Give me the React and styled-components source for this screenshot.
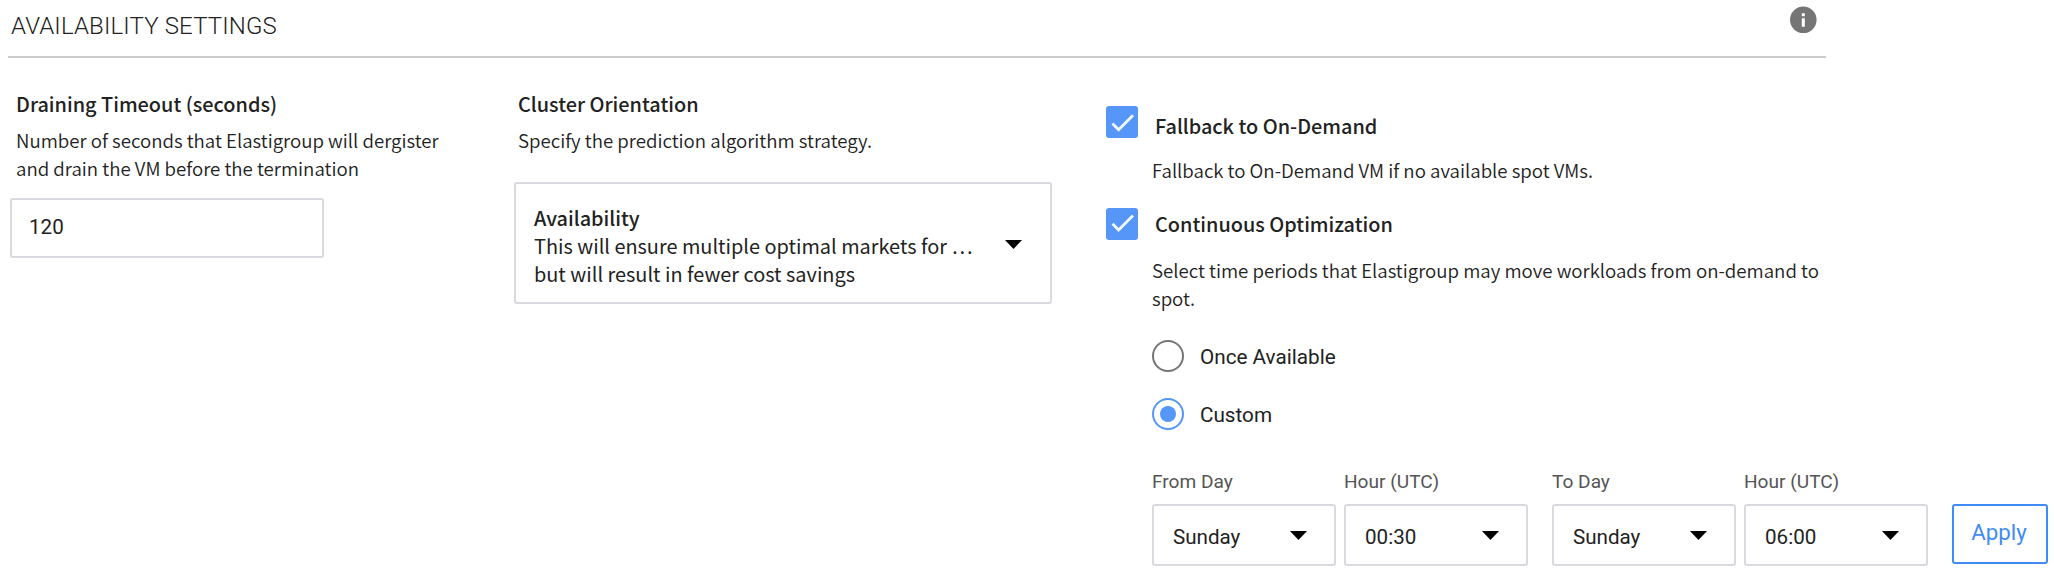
import React from "react";
import styled, { createGlobalStyle } from "styled-components";

const source = '"Noto Sans CJK SC", sans-serif';
const sourceBook = '"Noto Sans CJK SC DemiLight", "Noto Sans CJK SC", sans-serif';

const GlobalStyle = createGlobalStyle`
  *, *::before, *::after { box-sizing: border-box; }
  body {
    margin: 0;
    background: #fff;
    color: #222;
    font-family: Roboto, sans-serif;
  }
`;

const Page = styled.main`
  width: 2054px;
  height: 572px;
  overflow: hidden;
  background: #fff;
`;

const Header = styled.header`
  display: flex;
  justify-content: space-between;
  align-items: flex-start;
  width: 1818px;
  height: 58px;
  margin-left: 8px;
  padding: 6px 9px 0 3px;
  border-bottom: 2px solid #ccc;
`;

const Title = styled.h1`
  margin: 5px 0 0;
  font-size: 24px;
  line-height: 30px;
  font-weight: 300;
  letter-spacing: 0.15px;
`;

const InfoIcon = styled.svg`
  display: block;
  width: 28px;
  height: 28px;
`;

const Columns = styled.div`
  display: grid;
  grid-template-columns: 504px 592px 948px;
  padding-left: 10px;
`;

const Column = styled.section`
  padding-top: ${(p) => p.$top}px;
`;

const Label = styled.h2`
  margin: 0 0 0 ${(p) => p.$indent || 0}px;
  font-family: ${source};
  font-size: 19.88px;
  line-height: 28px;
  font-weight: 500;
  white-space: nowrap;
`;

const Text = styled.p`
  margin: ${(p) => p.$gap}px 0 0 ${(p) => p.$indent || 0}px;
  font-family: ${sourceBook};
  font-size: 18.66px;
  font-weight: 350;
  line-height: 28px;
  color: #222;
  white-space: nowrap;
`;

const NumberInput = styled.input`
  display: block;
  width: 314px;
  height: 60px;
  margin-top: 16px;
  padding: 0 17px 2px;
  border: 2px solid #d9d9df;
  border-radius: 3px;
  background: #fff;
  color: #222;
  font: 400 20.6px Roboto, sans-serif;
  outline: none;
`;

const StrategySelect = styled.div`
  display: flex;
  justify-content: space-between;
  align-items: center;
  width: 538px;
  height: 122px;
  margin-top: 28px;
  padding: 0 28px 0 18px;
  border: 2px solid #d9d9df;
  border-radius: 3px;
`;

const StrategyText = styled.div`
  padding-top: 5px;
  font-family: ${source};
  font-size: 19.9px;
  line-height: 28px;
  white-space: nowrap;
`;

const StrategyName = styled.div`
  font-weight: 500;
`;

const ArrowIcon = styled.svg`
  display: block;
  flex: none;
  width: 17px;
  height: 9px;
  margin-top: ${(p) => p.$drop || 0}px;
`;

const CheckRow = styled.div`
  display: flex;
  align-items: flex-start;
  height: 32px;
  margin-top: ${(p) => p.$gap || 0}px;
`;

const CheckBox = styled.span`
  width: 32px;
  height: 32px;
  margin-right: 17px;
  border-radius: 3px;
  background: #5596f8;
`;

const CheckIcon = styled.svg`
  display: block;
  width: 32px;
  height: 32px;
`;

const CheckLabel = styled(Label)`
  padding-top: ${(p) => p.$drop}px;
`;

const RadioGroup = styled.div`
  display: flex;
  flex-direction: column;
  gap: 26px;
  margin: 28px 0 0 46px;
`;

const RadioRow = styled.label`
  display: flex;
  align-items: center;
  gap: 16px;
  height: 32px;
`;

const RadioText = styled.span`
  padding-top: 2px;
  font-size: 20.7px;
  line-height: 30px;
`;

const Radio = styled.span`
  display: grid;
  place-items: center;
  width: 32px;
  height: 32px;
  border: 2px solid ${(p) => (p.$on ? "#5596f8" : "#757575")};
  border-radius: 50%;
  &::after {
    content: "";
    width: 16px;
    height: 16px;
    border-radius: 50%;
    background: ${(p) => (p.$on ? "#5596f8" : "transparent")};
  }
`;

const Schedule = styled.div`
  display: flex;
  align-items: flex-start;
  gap: 24px;
  margin: 38px 0 0 46px;
`;

const Pair = styled.div`
  display: flex;
  gap: 8px;
`;

const FieldLabel = styled.div`
  height: 36px;
  padding-top: 2px;
  font-size: 19.1px;
  line-height: 24px;
  color: #555;
`;

const Select = styled.div`
  display: flex;
  align-items: center;
  justify-content: space-between;
  width: 184px;
  height: 62px;
  padding: 0 27px 0 19px;
  border: 2px solid #d9d9df;
  border-radius: 3px;
  font-size: 20.6px;
`;

const SelectValue = styled.span`
  padding-top: 3px;
`;

const ApplyButton = styled.button`
  width: 96px;
  height: 60px;
  margin-top: 36px;
  padding: 0 2px 5px 0;
  border: 2px solid #3f8cf8;
  border-radius: 3px;
  background: #fff;
  color: #3f8cf8;
  font: 400 22.3px Roboto, sans-serif;
`;

const Arrow = ({ drop }) => (
  <ArrowIcon $drop={drop} viewBox="0 0 17 9">
    <path d="M0 0H17L8.5 9Z" fill="#000" />
  </ArrowIcon>
);

const Check = ({ label, gap, drop, tick }) => (
  <CheckRow $gap={gap}>
    <CheckBox>
      <CheckIcon viewBox="0 0 32 32">
        <path d={tick} fill="none" stroke="#fff" strokeOpacity="0.92" strokeWidth="2.8" />
      </CheckIcon>
    </CheckBox>
    <CheckLabel $drop={drop}>{label}</CheckLabel>
  </CheckRow>
);

const Field = ({ label, value }) => (
  <div>
    <FieldLabel>{label}</FieldLabel>
    <Select>
      <SelectValue>{value}</SelectValue>
      <Arrow />
    </Select>
  </div>
);

export default function App() {
  return (
    <Page>
      <GlobalStyle />
      <Header>
        <Title>AVAILABILITY SETTINGS</Title>
        <InfoIcon viewBox="0 0 28 28">
          <circle cx="14.3" cy="13.8" r="13.3" fill="#757575" />
          <path d="M12.8 7.2h3v3h-3zM12.8 12.3h3v8.4h-3z" fill="#fff" />
        </InfoIcon>
      </Header>
      <Columns>
        <Column $top={32}>
          <Label $indent={6}>Draining Timeout (seconds)</Label>
          <Text $indent={6} $gap={8}>
            Number of seconds that Elastigroup will dergister
            <br />
            and drain the VM before the termination
          </Text>
          <NumberInput defaultValue="120" />
        </Column>
        <Column $top={32}>
          <Label $indent={4}>Cluster Orientation</Label>
          <Text $indent={4} $gap={8}>
            Specify the prediction algorithm strategy.
          </Text>
          <StrategySelect>
            <StrategyText>
              <StrategyName>Availability</StrategyName>
              <div>This will ensure multiple optimal markets for …</div>
              <div>but will result in fewer cost savings</div>
            </StrategyText>
            <Arrow drop={3} />
          </StrategySelect>
        </Column>
        <Column $top={48}>
          <Check label="Fallback to On-Demand" drop={6} tick="M6.5 17.5L12.6 23.8L27 9.3" />
          <Text $indent={46} $gap={18}>
            Fallback to On-Demand VM if no available spot VMs.
          </Text>
          <Check
            label="Continuous Optimization"
            gap={24}
            drop={2}
            tick="M6.5 15.7L12.6 22L27 7.5"
          />
          <Text $indent={46} $gap={16}>
            Select time periods that Elastigroup may move workloads from on-demand to
            <br />
            spot.
          </Text>
          <RadioGroup>
            <RadioRow>
              <Radio />
              <RadioText>Once Available</RadioText>
            </RadioRow>
            <RadioRow>
              <Radio $on />
              <RadioText>Custom</RadioText>
            </RadioRow>
          </RadioGroup>
          <Schedule>
            <Pair>
              <Field label="From Day" value="Sunday" />
              <Field label="Hour (UTC)" value="00:30" />
            </Pair>
            <Pair>
              <Field label="To Day" value="Sunday" />
              <Field label="Hour (UTC)" value="06:00" />
            </Pair>
            <ApplyButton>Apply</ApplyButton>
          </Schedule>
        </Column>
      </Columns>
    </Page>
  );
}
